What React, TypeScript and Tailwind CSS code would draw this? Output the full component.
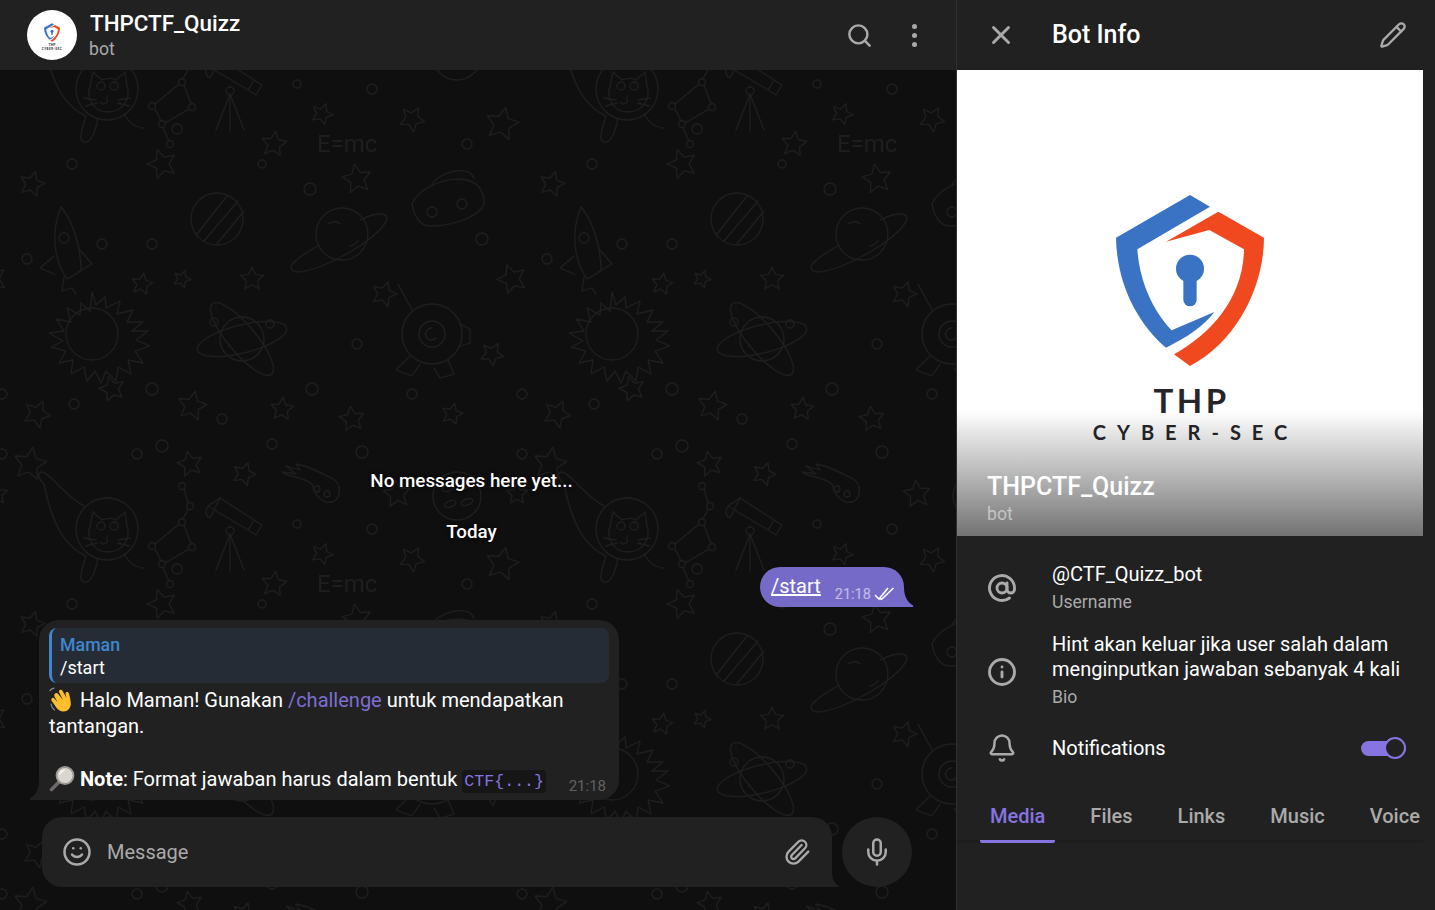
import React from "react";
import { Bell, Info, Mic, Paperclip, Pencil, Search, Smile, X, AtSign } from "lucide-react";

// five point star as a path
const star = (cx: number, cy: number, r: number, rot = 0) => {
  let d = "";
  for (let i = 0; i < 10; i++) {
    const rad = i % 2 === 0 ? r : r * 0.48;
    const a = ((rot + i * 36 - 90) * Math.PI) / 180;
    d += `${i === 0 ? "M" : "L"}${(cx + rad * Math.cos(a)).toFixed(1)} ${(cy + rad * Math.sin(a)).toFixed(1)}`;
  }
  return d + "Z";
};

const stars: number[][] = [
  [18, 30, 17, 10], [178, 30, 13, -12], [232, 40, 12, 20], [262, 150, 13, 8], [150, 170, 15, -18],
  [20, 190, 13, 15], [345, 185, 15, -10], [400, 125, 13, 30], [490, 130, 17, 12], [500, 285, 15, -20],
  [180, 412, 15, 12], [372, 300, 13, 18], [25, 420, 14, 25], [340, 425, 13, -8], [440, 420, 11, 14],
  [240, 285, 12, 0], [310, 120, 11, 22], [385, 60, 14, -6], [130, 290, 11, 10], [480, 360, 12, 30],
  [100, 395, 13, -15], [270, 415, 12, 5], [505, 60, 11, 0], [170, 285, 9, 20],
];
const dots: number[][] = [
  [150, 12, 6], [125, 20, 5], [60, 170, 5], [165, 135, 5], [298, 195, 6], [90, 250, 5], [260, 10, 5],
  [350, 18, 6], [360, 95, 5], [210, 425, 5], [140, 250, 5], [62, 410, 5], [470, 245, 6], [400, 400, 5],
  [300, 395, 6], [510, 20, 5], [510, 400, 5], [140, 395, 6], [285, 90, 4], [455, 150, 5], [345, 350, 5],
  [250, 170, 4], [15, 265, 5],
];

const SpacePattern = () => (
  <svg className="absolute inset-0 w-full h-full" aria-hidden="true">
    <defs>
      <pattern id="space" width="520" height="440" patternUnits="userSpaceOnUse" patternTransform="translate(12 -6)">
        <g fill="none" stroke="#1e1e1e" strokeWidth="1.3" strokeLinejoin="round" strokeLinecap="round">
          {stars.map((s, i) => (
            <path key={i} d={star(s[0], s[1], s[2], s[3])} />
          ))}
          {dots.map((c, i) => (
            <circle key={i} cx={c[0]} cy={c[1]} r={c[2]} />
          ))}
          {/* cat in a helmet */}
          <circle cx="95" cy="95" r="31" />
          <path d="M78 92l3-14 9 8c5-2 10-2 14 0l9-8 2 14c4 12-4 26-19 26s-22-14-18-26z" />
          <circle cx="89" cy="92" r="4" /><circle cx="102" cy="92" r="4" />
          <path d="M95 102v6c-2 3-6 2-7 0M72 104l12 2M74 112l11-3M106 106l12-2M106 109l11 3" />
          <path d="M72 72C50 60 40 40 30 38c-6 0-3 8 2 12 6 30 16 60 42 72-4 14-8 24-2 26 8 2 12-14 14-24M112 120c4 8 12 14 20 14" />
          {/* constellation */}
          <circle cx="170" cy="52" r="3.5" /><circle cx="178" cy="72" r="3.5" /><circle cx="170" cy="88" r="3.5" />
          <circle cx="140" cy="112" r="3.5" /><circle cx="180" cy="113" r="3.5" /><circle cx="150" cy="130" r="3.5" /><circle cx="158" cy="150" r="3.5" />
          <path d="M172 55l4 14M176 75l-5 10M167 90l-24 20M172 91l7 19M177 115l-24 14M143 115l6 12M151 134l6 13" />
          {/* telescope */}
          <path d="M196 72l12-8 34 22-6 10zM196 72c-4 6-2 10 2 12l10-20M242 86l8 5-6 10-8-5M218 100v38M218 100l-14 36M218 100l14 36" />
          <circle cx="218" cy="97" r="4" />
          {/* comet */}
          <path d="M300 50c-10-8-22-6-30-12l14 2-10-8 14 4-4-6c14 2 26 10 36 14 10 6 10 20 0 24-8 2-18-6-20-18z" />
          <circle cx="305" cy="55" r="3" /><circle cx="315" cy="60" r="3" />
          {/* moon with craters */}
          <circle cx="445" cy="62" r="24" />
          <ellipse cx="436" cy="54" rx="6" ry="3" transform="rotate(-20 436 54)" />
          <ellipse cx="452" cy="52" rx="6" ry="3" transform="rotate(-20 452 52)" />
          <ellipse cx="438" cy="70" rx="6" ry="3" transform="rotate(-20 438 70)" />
          <ellipse cx="455" cy="68" rx="6" ry="3" transform="rotate(-20 455 68)" />
          {/* striped planet */}
          <circle cx="205" cy="225" r="26" />
          <path d="M185 240l30-38M192 247l34-40M204 251l28-34" />
          {/* rocket */}
          <path d="M55 285c-14-20-16-48-6-72 12 14 20 40 20 64zM42 262l-14 12 14 6M68 256l12 14-14 8M52 283l-2 14 10-3 4 6" />
          <circle cx="52" cy="244" r="5" />
          {/* formula */}
          <text x="305" y="158" fontFamily="Roboto, sans-serif" fontSize="24" fill="#1e1e1e" stroke="none">E=mc</text>
          {/* ringed planet */}
          <circle cx="330" cy="240" r="26" />
          <path d="M306 252c-22 12-30 20-26 24 6 6 34-4 58-18s40-30 36-36c-3-4-14-2-26 4" />
          <path d="M316 230c5-3 9-3 12 0M338 252c6-2 8-4 8-6" />
          {/* ufo */}
          <path d="M400 210c8-20 50-34 66-18 0 0 8 10 6 18-4 12-30 22-54 22-10 0-16-10-18-22zM420 190c8-12 36-20 42-6" />
          <circle cx="420" cy="218" r="5" /><circle cx="450" cy="210" r="5" />
          {/* sun */}
          <circle cx="80" cy="340" r="26" />
          <path d="M80 298l4 13 9-8 1 11 14-7-3 13 16-4-6 12h16l-11 9h16l-12 9 14 6-15 5 8 12-15-3 3 14-13-7-2 14-10-10-5 12-6-12-8 10-3-14-13 7 2-14-14 3 7-12-15-4 12-6-14-8 15-2-8-12 15 3-4-14 13 7 1-12 9 8z" />
          {/* atom */}
          <circle cx="230" cy="345" r="22" />
          <ellipse cx="230" cy="345" rx="46" ry="14" transform="rotate(-14 230 345)" />
          <ellipse cx="230" cy="345" rx="46" ry="14" transform="rotate(50 230 345)" />
          <circle cx="202" cy="328" r="4" /><circle cx="258" cy="330" r="4" />
          {/* rocket eye */}
          <circle cx="420" cy="340" r="30" /><circle cx="420" cy="340" r="13" /><path d="M420 334a6 6 0 1 0 4 10" />
          <path d="M400 316l-14-26M448 330l10 5v14l-10 3M398 362l-14 14 16 6 8-12M436 366l6 14-14 4-6-10" />
        </g>
      </pattern>
    </defs>
    <rect width="100%" height="100%" fill="url(#space)" />
  </svg>
);

const ShieldLogo = ({ className }: { className: string }) => (
  <svg viewBox="108 77 444 513" className={className} aria-hidden="true">
    <path fill="#3a73c4" d="M330 77L390 112L172 240C178 330 215 420 275 483L403 428C372 470 320 505 258 535C170 460 110 340 108 205Z" />
    <path fill="#f0481f" d="M415 127L552 205C552 340 480 510 330 590L282 555C400 490 490 380 492 240L388 182L258 217Z" />
    <circle cx="330" cy="298" r="42" fill="#3a73c4" />
    <rect x="310" y="315" width="40" height="96" rx="20" fill="#3a73c4" />
  </svg>
);

const WaveEmoji = () => (
  <svg viewBox="0 0 26 26" className="inline-block w-[26px] h-[26px] align-[-6px] mr-[5px]" aria-label="waving hand">
    <path fill="#fbbf2d" d="M6 6.500c1-1 2.300-.6 3 .3l5 6.200-3.800-7.500c-.6-1.300-.1-2.300.8-2.700 1-.4 2 0 2.600 1.200l4 7-1-3.500c-.4-1.400.2-2.200 1.200-2.400 1-.2 1.800.4 2.200 1.700 1 4 2 7.500 1.800 10.500-.3 4-3 7.200-7.200 7.200-3.500 0-5.600-1.800-7.500-4.300L2.800 14c-.8-1.100-.6-2.200.2-2.800.8-.6 1.800-.4 2.600.5l3 3.200-2.900-5c-.6-1.200-.6-2.500.3-3.400z" />
    <path fill="none" stroke="#7d8ca0" strokeWidth="1.200" strokeLinecap="round" d="M2 17c.4 2.500 1.500 4.500 3.500 6M1 3.500c1.200-1.300 2.500-2 4-2.300" />
  </svg>
);

const LoupeEmoji = () => (
  <svg viewBox="0 0 26 26" className="inline-block w-[26px] h-[26px] align-[-6px] mr-[5px]" aria-label="magnifying glass">
    <path stroke="#6d6a68" strokeWidth="3.600" strokeLinecap="round" d="M2.500 23.500l8-8" />
    <circle cx="16" cy="9.500" r="8.500" fill="#d9d5cf" stroke="#9a9792" strokeWidth="1.800" />
    <path fill="none" stroke="#f5f3ef" strokeWidth="1.600" strokeLinecap="round" d="M11 8c.6-2 2.200-3.300 4-3.600" />
  </svg>
);

const App: React.FC = () => {
  return (
    <div className="flex h-[910px] w-[1435px] overflow-hidden bg-[#0f0f0f] text-white font-['Roboto',sans-serif]">
      {/* Left: chat */}
      <div className="relative flex flex-col w-[956px] h-full">
        <SpacePattern />

        <header className="relative flex items-center h-[70px] shrink-0 bg-[#212121] pl-[27px]">
          <div className="flex flex-col items-center w-[50px] h-[50px] rounded-full bg-white pt-[13px]">
            <ShieldLogo className="w-[16px] h-[19px]" />
            <span className="text-[3.500px] leading-none font-bold text-[#333] mt-[2px]">THP</span>
            <span className="text-[3px] leading-none font-bold tracking-[0.5px] text-[#333]">CYBER-SEC</span>
          </div>
          <div className="ml-[13px] flex flex-col pt-[2px]">
            <span className="text-[22.400px] leading-[26px] font-medium">THPCTF_Quizz</span>
            <span className="text-[17.600px] leading-[26px] text-[#aaaaaa] ml-[-1px]">bot</span>
          </div>
          <div className="ml-auto flex items-center pr-[39px]">
            <Search className="text-[#aaaaaa] mr-[39px]" size={27} strokeWidth={2.200} />
            <div className="flex flex-col gap-[4px] items-center">
              <span className="w-[5px] h-[5px] rounded-full bg-[#aaaaaa]" />
              <span className="w-[5px] h-[5px] rounded-full bg-[#aaaaaa]" />
              <span className="w-[5px] h-[5px] rounded-full bg-[#aaaaaa]" />
            </div>
          </div>
        </header>

        {/* Messages */}
        <div className="relative flex-1 flex flex-col justify-end pl-[39px] pr-[52px] pb-[17px]">
          <div className="text-center text-[18.800px] leading-[24px] font-medium mb-[27px] [text-shadow:0_0_4px_#000]">
            No messages here yet...
          </div>
          <div className="text-center text-[18.800px] leading-[24px] font-medium mb-[23px] [text-shadow:0_0_4px_#000]">
            Today
          </div>

          <div className="self-end relative flex items-end h-[40px] w-[144px] pl-[11px] rounded-l-[20px] rounded-tr-[20px] bg-[#766ac8]">
            <a className="text-[20px] leading-[38px] underline self-start">/start</a>
            <span className="ml-[14px] mb-[2px] text-[14.500px] leading-[20px] text-white/55">21:18</span>
            <svg viewBox="0 0 22 14" className="w-[22px] h-[14px] mb-[6px] ml-[3px]" fill="none" stroke="#fff" strokeWidth="1.600" aria-hidden="true">
              <path d="M1 8l4 4L14 1M8 12L19.500 1M5.500 11.500l2.500 1" />
            </svg>
            <svg viewBox="0 0 10 20" className="absolute left-full bottom-0 w-[10px] h-[20px]" fill="#766ac8" aria-hidden="true">
              <path d="M0 0C0 9 3 15 9 18.500Q10 20 8 20H0Z" />
            </svg>
          </div>

          <div className="relative w-[580px] h-[180px] mt-[13px] rounded-t-[20px] rounded-br-[20px] bg-[#212121] pt-[8px] pl-[10px] pr-[10px]">
            <div className="h-[55px] rounded-[8px] border-l-[3px] border-[#3e86cf] bg-[#262c35] pl-[8px] pt-[5px]">
              <div className="text-[17.800px] leading-[24px] font-medium text-[#3e86cf]">Maman</div>
              <div className="text-[18px] leading-[22px]">/start</div>
            </div>
            <p className="mt-[4px] text-[20px] leading-[26.200px]">
              <WaveEmoji />
              Halo Maman! Gunakan <span className="text-[#7d6fd1]">/challenge</span> untuk mendapatkan
              <br />
              tantangan.
              <br />
              <br />
              <LoupeEmoji />
              <b className="font-bold">Note</b>: Format jawaban harus dalam bentuk{" "}
              <code className="px-[2px] py-[2px] rounded-[4px] bg-[#161616] text-[#8774e1] text-[16.600px] leading-none font-['Liberation_Mono',monospace]">
                CTF{"{...}"}
              </code>
            </p>
            <span className="absolute right-[13px] bottom-[4px] text-[15px] leading-[20px] text-white/30">21:18</span>
            <svg viewBox="0 0 10 20" className="absolute right-full bottom-0 w-[10px] h-[20px]" fill="#212121" aria-hidden="true">
              <path d="M10 0C10 9 7 15 1 18.500Q0 20 2 20H10Z" />
            </svg>
          </div>
        </div>

        {/* Composer */}
        <div className="relative flex items-center gap-[10px] pl-[42px] pb-[23px] shrink-0">
          <div className="relative flex items-center w-[790px] h-[70px] rounded-l-[20px] rounded-tr-[20px] bg-[#212121] pl-[20px] pr-[21px]">
            <Smile className="text-[#aaaaaa]" size={30} strokeWidth={2} />
            <span className="ml-[15px] text-[20px] text-[#aaaaaa]">Message</span>
            <Paperclip className="ml-auto text-[#aaaaaa]" size={28} strokeWidth={2} />
            <svg viewBox="0 0 8 16" className="absolute left-full bottom-0 w-[8px] h-[16px]" fill="#212121" aria-hidden="true">
              <path d="M0 0C0 7 2 12 7 15Q8 16 6 16H0Z" />
            </svg>
          </div>
          <div className="flex items-center justify-center w-[70px] h-[70px] rounded-full bg-[#212121]">
            <Mic className="text-[#aaaaaa]" size={30} strokeWidth={2} />
          </div>
        </div>
      </div>

      {/* Right: bot info */}
      <aside className="flex flex-col w-[479px] h-full bg-[#212121] border-l border-[#303030]">
        <div className="flex items-center h-[70px] shrink-0 pl-[29px] pr-[28px]">
          <X className="text-[#aaaaaa]" size={30} strokeWidth={2.300} />
          <h1 className="ml-[36px] text-[25px] font-medium">Bot Info</h1>
          <Pencil className="ml-auto text-[#aaaaaa]" size={28} strokeWidth={2} />
        </div>

        <div className="relative flex flex-col items-center w-[466px] h-[466px] shrink-0 bg-white pt-[125px] text-[#26262a] font-['Lato',sans-serif]">
          <ShieldLogo className="w-[148px] h-[171px]" />
          <div className="mt-[19px] text-[33px] leading-[30px] font-bold tracking-[3.500px] pl-[3px]">THP</div>
          <div className="mt-[7px] text-[20px] leading-[20px] font-bold tracking-[11px] pl-[11px]">CYBER-SEC</div>
          <div className="absolute left-0 right-0 bottom-0 h-[126px] bg-linear-to-b from-transparent to-black/55 flex flex-col justify-end pl-[30px] pb-[11px] font-['Roboto',sans-serif]">
            <div className="text-[25px] leading-[32px] font-medium text-white">THPCTF_Quizz</div>
            <div className="text-[17.600px] leading-[22px] text-white/50">bot</div>
          </div>
        </div>

        <div className="flex flex-col w-[466px] pt-[24px]">
          <div className="flex items-center pl-[30px]">
            <AtSign className="text-[#aaaaaa]" size={30} strokeWidth={2.300} />
            <div className="ml-[35px]">
              <div className="text-[20px] leading-[28px]">@CTF_Quizz_bot</div>
              <div className="text-[17.600px] leading-[28px] text-[#aaaaaa]">Username</div>
            </div>
          </div>
          <div className="flex items-center pl-[30px] mt-[16px]">
            <Info className="text-[#aaaaaa]" size={30} strokeWidth={2.300} />
            <div className="ml-[35px]">
              <div className="text-[20px] leading-[25px] w-[360px]">
                Hint akan keluar jika user salah dalam menginputkan jawaban sebanyak 4 kali
              </div>
              <div className="text-[17.600px] leading-[30px] text-[#aaaaaa]">Bio</div>
            </div>
          </div>
          <div className="flex items-center pl-[30px] mt-[21px] h-[30px]">
            <Bell className="text-[#aaaaaa]" size={30} strokeWidth={2} />
            <span className="ml-[35px] text-[20px]">Notifications</span>
            <div className="relative ml-auto mr-[17px] w-[45px] h-[15px] rounded-full bg-[#8774e1]">
              <span className="absolute right-0 top-[-4px] w-[22px] h-[22px] rounded-full border-2 border-[#8774e1] bg-[#212121]" />
            </div>
          </div>

          <nav className="flex w-[466px] h-[44px] mt-[36px] pl-[23px] gap-[25px] border-b-[3px] border-[#1d1d1d] text-[20px] font-medium text-[#aaaaaa]">
            <a className="h-[44px] px-[10px] text-[#8774e1] leading-[34px] border-b-[3px] border-[#8774e1] rounded-b-[2px]">Media</a>
            <a className="px-[10px] leading-[34px]">Files</a>
            <a className="px-[10px] leading-[34px]">Links</a>
            <a className="px-[10px] leading-[34px]">Music</a>
            <a className="px-[10px] leading-[34px]">Voice</a>
          </nav>
        </div>
      </aside>
    </div>
  );
};

export default App;
